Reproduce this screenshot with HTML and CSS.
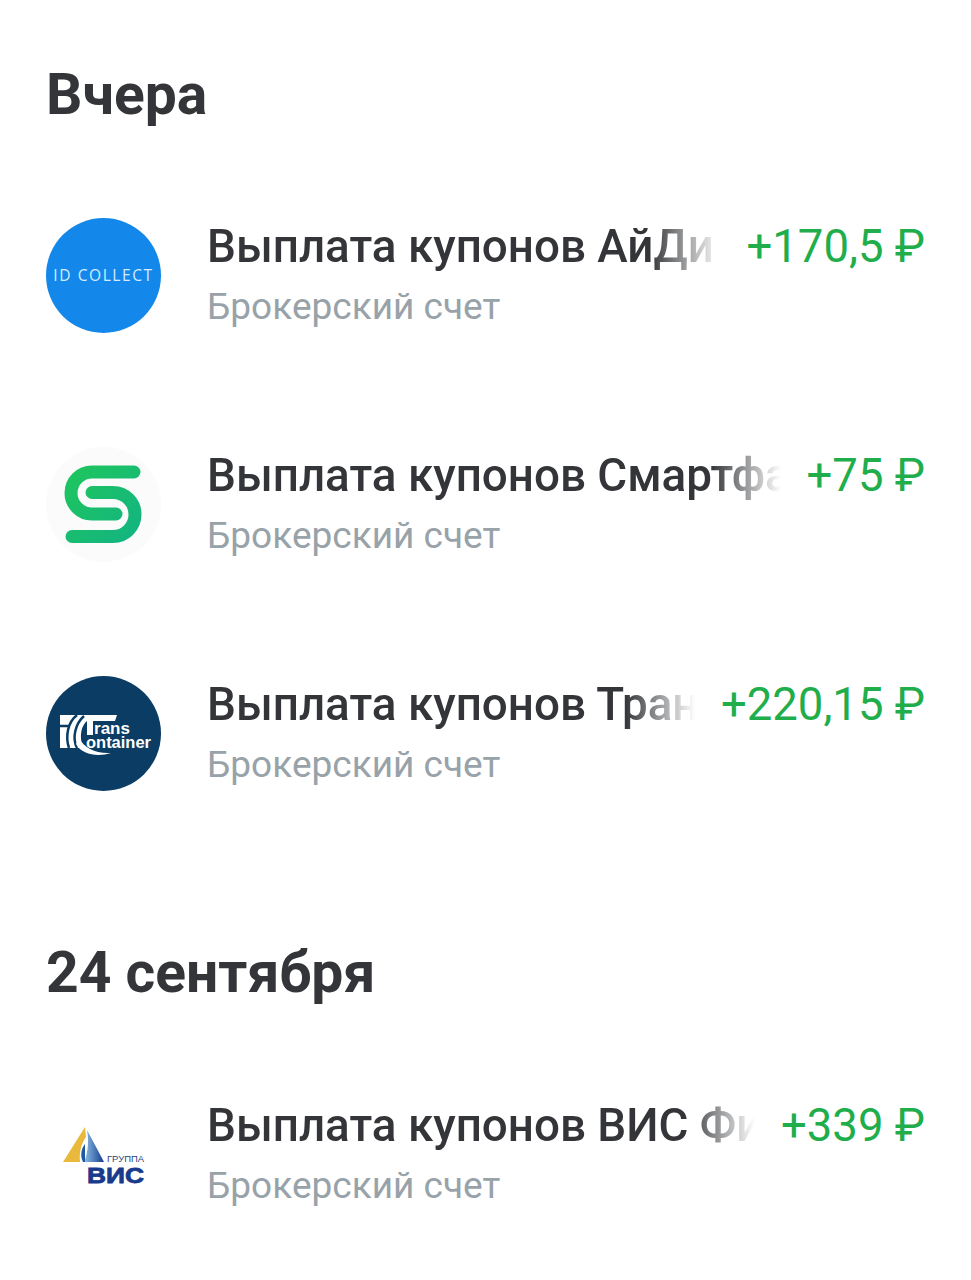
FILE: index.html
```html
<!DOCTYPE html>
<html>
<head>
<meta charset="utf-8">
<title>Операции</title>
<link rel="stylesheet" href="styles.css">
</head>
<body>
  <div class="feed">
    <h2 class="day-title">Вчера</h2>
    <div class="op-row">
      <svg class="op-logo" viewBox="0 0 115 115">
        <circle cx="57.5" cy="57.5" r="57.5" fill="#1488ea"/>
        <text class="logo-id" x="57.5" y="63" text-anchor="middle">ID COLLECT</text>
      </svg>
      <div class="op-body">
        <div class="op-top">
          <div class="op-name">Выплата купонов АйДи Коллект</div>
          <div class="op-sum">+170,5 ₽</div>
        </div>
        <div class="op-sub">Брокерский счет</div>
      </div>
    </div>
    <div class="op-row">
      <svg class="op-logo" viewBox="0 0 115 115">
        <defs>
          <linearGradient id="sf" gradientUnits="userSpaceOnUse" x1="20" y1="20" x2="95" y2="95">
            <stop offset="0" stop-color="#1fc65c"/>
            <stop offset="1" stop-color="#12b383"/>
          </linearGradient>
        </defs>
        <circle cx="57.5" cy="57.5" r="57.5" fill="#fafbfa"/>
        <path d="M88 25 H46 A21 21 0 0 0 46 67 H70" fill="none" stroke="url(#sf)" stroke-width="13" stroke-linecap="round"/>
        <path d="M46 45.500 H67 A22 22 0 0 1 67 89.500 H26" fill="none" stroke="url(#sf)" stroke-width="13" stroke-linecap="round"/>
      </svg>
      <div class="op-body">
        <div class="op-top">
          <div class="op-name">Выплата купонов Смартфакт</div>
          <div class="op-sum">+75 ₽</div>
        </div>
        <div class="op-sub">Брокерский счет</div>
      </div>
    </div>
    <div class="op-row">
      <svg class="op-logo" viewBox="0 0 115 115">
        <circle cx="57.5" cy="57.5" r="57.5" fill="#0b3c64"/>
        <path d="M14 39 H71 L69 45 H47 V59 H41 V45 C35 50 33 60 37 72 H14 Z" fill="#fff"/>
        <path d="M31 39 C22 46 19 60 23 72 M38 40 C29 48 26 62 31 72 M14 50 H24" fill="none" stroke="#0b3c64" stroke-width="2.500"/>
        <path d="M33 62 C38 72 50 78 65 77 C52 81 36 79 30 68 Z" fill="#fff"/>
        <text class="logo-tc" x="48" y="58" textLength="36" lengthAdjust="spacingAndGlyphs">rans</text>
        <text class="logo-tc" x="40" y="72" textLength="65" lengthAdjust="spacingAndGlyphs">ontainer</text>
      </svg>
      <div class="op-body">
        <div class="op-top">
          <div class="op-name">Выплата купонов Трансконтейнер</div>
          <div class="op-sum">+220,15 ₽</div>
        </div>
        <div class="op-sub">Брокерский счет</div>
      </div>
    </div>

    <h2 class="day-title day-title-next">24 сентября</h2>
    <div class="op-row">
      <svg class="op-logo" viewBox="0 0 115 115">
        <defs>
          <linearGradient id="vis" x1="0" y1="0" x2="1" y2="0">
            <stop offset="0" stop-color="#8fc0e6"/>
            <stop offset="1" stop-color="#123c8c"/>
          </linearGradient>
        </defs>
        <path d="M39 30 L17 65 H34 C33 56 35 47 40 40 Z" fill="#e8b93a"/>
        <path d="M41 33 L58 65 H38 C42 56 43 44 41 33 Z" fill="url(#vis)"/>
        <path d="M37 65 C34 59 35 52 39 47 L39 65 Z" fill="#1e5aa0"/>
        <text class="logo-vis-small" x="61" y="65" textLength="37" lengthAdjust="spacingAndGlyphs">ГРУППА</text>
        <text class="logo-vis" x="41" y="86" textLength="57" lengthAdjust="spacingAndGlyphs">ВИС</text>
      </svg>
      <div class="op-body">
        <div class="op-top">
          <div class="op-name">Выплата купонов ВИС Финанс</div>
          <div class="op-sum">+339 ₽</div>
        </div>
        <div class="op-sub">Брокерский счет</div>
      </div>
    </div>
  </div>
</body>
</html>
```

FILE: styles.css
```css
body {
  margin: 0;
  background-color: #fff;
  font-family: Roboto, "Noto Sans", sans-serif;
  color: #333538;
}

.feed {
  height: 1280px;
  overflow: hidden;
  padding: 64px 46px 0 46px;
  box-sizing: border-box;
}

.day-title {
  margin: 0 0 93px 0;
  font-size: 57px;
  line-height: 61px;
  font-weight: 700;
}

.day-title-next {
  margin-top: 151px;
  margin-bottom: 94px;
}

.op-row {
  display: flex;
  align-items: center;
  gap: 46px;
  height: 115px;
  margin-bottom: 114px;
}

.op-logo {
  width: 115px;
  height: 115px;
  flex: none;
}

.op-body {
  flex: 1;
  min-width: 0;
  padding-bottom: 4px;
}

.op-top {
  display: flex;
  gap: 26px;
  align-items: center;
  height: 56px;
}

.op-name {
  flex: 1;
  min-width: 0;
  white-space: nowrap;
  overflow: hidden;
  font-size: 45.8px;
  line-height: 56px;
  font-weight: 500;
  -webkit-mask-image: linear-gradient(to left, transparent 0, #000 70px);
  mask-image: linear-gradient(to left, transparent 0, #000 70px);
}

.op-sum {
  flex: none;
  font-size: 45.5px;
  line-height: 56px;
  color: #1fae4b;
}

.op-sub {
  margin-top: 11px;
  font-size: 37px;
  line-height: 42px;
  color: #98a2a9;
}

.logo-id {
  font-family: "Open Sans", sans-serif;
  font-size: 15.5px;
  letter-spacing: 1.6px;
  fill: #d3ecff;
}

.logo-tc {
  font-family: "Liberation Sans", sans-serif;
  font-size: 17px;
  font-weight: 700;
  fill: #fff;
}

.logo-vis-small {
  font-family: "Liberation Sans", sans-serif;
  font-size: 9px;
  fill: #2a3f80;
}

.logo-vis {
  font-family: "Liberation Sans", sans-serif;
  font-size: 22px;
  font-weight: 700;
  fill: #173a8c;
  stroke: #173a8c;
  stroke-width: 0.8px;
}
```
